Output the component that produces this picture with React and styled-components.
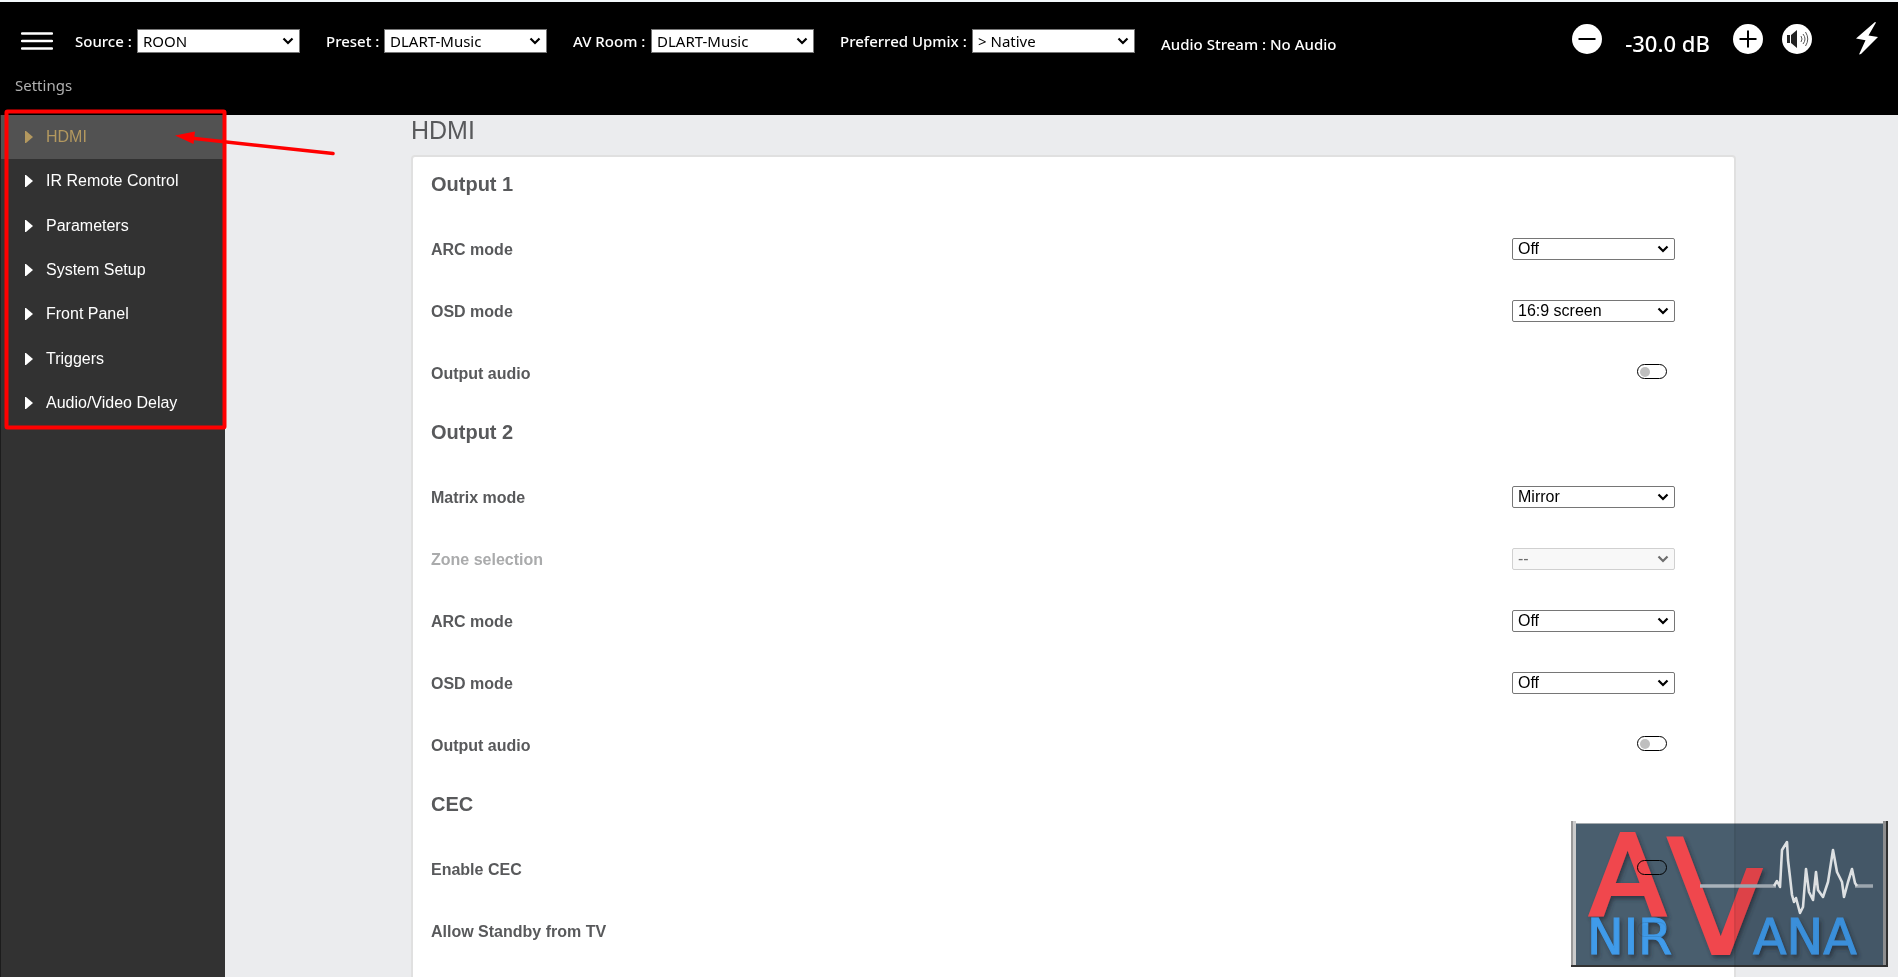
import React, { useState } from 'react';
import styled, { createGlobalStyle, css } from 'styled-components';

const colors = {
  black: '#000000',
  white: '#ffffff',
  page: '#ebecee',
  sidebar: '#323232',
  active: '#525252',
  gold: '#b3985f',
  text: '#58595b',
  muted: '#aaabac',
  border: '#e0e0e0',
  mark: '#ff0000',
};

const headerFont = '"Noto Sans", "Open Sans", sans-serif';
const bodyFont = '"Liberation Sans", Arial, sans-serif';

const chevron = (color) =>
  `url("data:image/svg+xml,%3Csvg xmlns='http://www.w3.org/2000/svg' width='12' height='8'%3E%3Cpath d='M1.500 1.500L6 6l4.500-4.500' fill='none' stroke='%23${color}' stroke-width='2.200'/%3E%3C/svg%3E")`;

const GlobalStyle = createGlobalStyle`
  * {
    box-sizing: border-box;
  }
  body {
    margin: 0;
    background: ${colors.page};
    color: ${colors.text};
    font-family: ${bodyFont};
    font-size: 16px;
  }
`;

const Page = styled.div`
  position: relative;
  display: flex;
  flex-direction: column;
  height: 100vh;
  overflow: hidden;
`;

const Header = styled.header`
  flex: none;
  padding: 21px 20px 18px 21px;
  border-top: 2px solid #f3f8fb;
  background: ${colors.black};
  color: ${colors.white};
  font-family: ${headerFont};
  font-size: 15px;
  font-weight: 500;
`;

const Toolbar = styled.div`
  display: flex;
  align-items: center;
  height: 36px;
`;

const IconButton = styled.button`
  display: flex;
  flex: none;
  padding: 0;
  border: 0;
  background: none;
  color: inherit;
  cursor: pointer;
`;

const Fields = styled.div`
  display: flex;
  align-items: center;
  gap: 26px;
  margin-left: 22px;
`;

const Field = styled.div`
  display: flex;
  align-items: center;
  justify-content: space-between;
  width: ${({ $width }) => $width}px;
  white-space: nowrap;
`;

const Select = styled.select`
  flex: none;
  appearance: none;
  width: 163px;
  height: 22px;
  padding: 0 20px 0 5px;
  border: 1px solid #767676;
  border-radius: 2px;
  background: ${colors.white} ${chevron('000')} no-repeat right 5px center;
  color: ${colors.black};
  font-family: ${bodyFont};
  font-size: 16px;
  line-height: 20px;

  &:disabled {
    border-color: #d0d0d0;
    background-color: #f8f8f8;
    background-image: ${chevron('6d6d6d')};
    color: #6d6d6d;
    opacity: 1;
  }
`;

const HeaderSelect = styled(Select)`
  height: 24px;
  border-radius: 0;
  font-family: ${headerFont};
  font-size: 15px;
`;

const Stream = styled.span`
  padding-top: 6px;
  white-space: nowrap;
`;

const Controls = styled.div`
  display: flex;
  align-items: center;
  margin-left: auto;
  padding-bottom: 5px;
`;

const Volume = styled.output`
  width: 131px;
  padding-top: 8px;
  font-size: 22px;
  line-height: 28px;
  text-align: center;
  white-space: nowrap;
`;

const MuteButton = styled(IconButton)`
  margin: 0 44px 0 19px;
`;

const Breadcrumb = styled.div`
  margin: 14px 0 0 -6px;
  color: #b0b0b0;
  font-weight: 400;
  line-height: 24px;
`;

const Body = styled.div`
  display: flex;
  flex: 1;
  min-height: 0;
`;

const Sidebar = styled.nav`
  flex: none;
  width: 225px;
  border-left: 1px solid #1c1c1c;
  background: ${colors.sidebar};
`;

const MenuList = styled.ul`
  display: grid;
  grid-auto-rows: 1fr;
  min-height: 310px;
  margin: 0;
  padding: 0;
  list-style: none;
`;

const MenuLink = styled.a`
  display: flex;
  align-items: center;
  gap: 13px;
  height: 100%;
  padding-left: 24px;
  color: ${colors.white};
  text-decoration: none;

  ${({ $active }) => $active && css`
    background: ${colors.active};
    color: ${colors.gold};
  `}
`;

const Content = styled.main`
  flex: 1;
  margin: 0 162px 0 186px;
`;

const Title = styled.h1`
  margin: 0;
  padding: 1px 0 11px;
  font-size: 25px;
  font-weight: 400;
  line-height: 28px;
`;

const Card = styled.div`
  padding: 0 59px 20px 18px;
  border: 2px solid ${colors.border};
  border-radius: 4px;
  background: ${colors.white};
`;

const SectionTitle = styled.h2`
  margin: 0;
  padding: 15px 0 23px;
  font-size: 20px;
  line-height: 24px;
`;

const Row = styled.div`
  display: flex;
  align-items: center;
  justify-content: space-between;
  height: 62px;
  padding-bottom: 2px;
`;

const RowLabel = styled.label`
  padding-top: 2px;
  color: ${({ $disabled }) => ($disabled ? colors.muted : colors.text)};
  font-weight: 700;
`;

const Toggle = styled.input`
  display: flex;
  align-items: center;
  appearance: none;
  width: 30px;
  height: 15px;
  margin: 0 8px 3px 0;
  padding: 0 2px;
  border: 1px solid ${colors.black};
  border-radius: 8px;
  background: ${colors.white};

  &::before {
    content: '';
    width: 10px;
    height: 10px;
    border-radius: 50%;
    background: ${({ $blank }) => ($blank ? 'transparent' : '#bfbfbf')};
  }

  &:checked {
    justify-content: flex-end;
  }

  &:disabled {
    opacity: 0.1;
  }
`;

// Overlays that sit on top of the page
const Annotation = styled.svg`
  position: absolute;
  top: 108px;
  left: 0;
  pointer-events: none;
`;

const Watermark = styled.svg`
  position: absolute;
  right: 10px;
  bottom: 10px;
  mix-blend-mode: multiply;
  pointer-events: none;
`;

const headerFields = [
  { id: 'source', label: 'Source :', value: 'ROON', width: 225 },
  { id: 'preset', label: 'Preset :', value: 'DLART-Music', width: 221 },
  { id: 'room', label: 'AV Room :', value: 'DLART-Music', width: 241 },
  { id: 'upmix', label: 'Preferred Upmix :', value: '> Native', width: 295 },
];

const menu = [
  'HDMI',
  'IR Remote Control',
  'Parameters',
  'System Setup',
  'Front Panel',
  'Triggers',
  'Audio/Video Delay',
];

const sections = [
  {
    title: 'Output 1',
    rows: [
      { label: 'ARC mode', value: 'Off' },
      { label: 'OSD mode', value: '16:9 screen' },
      { label: 'Output audio' },
    ],
  },
  {
    title: 'Output 2',
    rows: [
      { label: 'Matrix mode', value: 'Mirror' },
      { label: 'Zone selection', value: '--', disabled: true },
      { label: 'ARC mode', value: 'Off' },
      { label: 'OSD mode', value: 'Off' },
      { label: 'Output audio' },
    ],
  },
  {
    title: 'CEC',
    rows: [
      { label: 'Enable CEC', blank: true },
      { label: 'Allow Standby from TV', toggleDisabled: true },
    ],
  },
];

const MenuIcon = () => (
  <svg width="32" height="18" viewBox="0 0 32 18">
    <path d="M1 1.500h30M1 9h30M1 16.500h30" stroke="currentColor" strokeWidth="2.500" strokeLinecap="round" />
  </svg>
);

const RoundIcon = ({ children }) => (
  <svg width="30" height="30" viewBox="0 0 30 30">
    <circle cx="15" cy="15" r="15" fill="#fff" />
    {children}
  </svg>
);

const BoltIcon = () => (
  <svg width="22" height="33" viewBox="0 0 22 33">
    <path d="M19 0L0 16.5l9.5 1.8L3 32.5l2-.5L22 15l-9.5-1.5L20 .5z" fill="#fff" />
  </svg>
);

const SettingRow = ({ id, label, value, disabled, toggleDisabled, blank }) => {
  const [on, setOn] = useState(false);
  return (
    <Row>
      <RowLabel htmlFor={id} $disabled={disabled}>{label}</RowLabel>
      {value ? (
        <Select id={id} disabled={disabled}>
          <option>{value}</option>
        </Select>
      ) : (
        <Toggle
          id={id}
          type="checkbox"
          checked={on}
          disabled={toggleDisabled}
          $blank={blank}
          onChange={(e) => setOn(e.target.checked)}
        />
      )}
    </Row>
  );
};

const Logo = () => (
  <Watermark width="317" height="146" viewBox="0 0 317 146" role="img" aria-label="AV Nirvana">
    <defs>
      <filter id="logoShadow" x="-10%" y="-10%" width="125%" height="125%">
        <feDropShadow dx="2" dy="3" stdDeviation="2" floodColor="#222b33" floodOpacity="0.7" />
      </filter>
      <clipPath id="armClip">
        <path d="M60 0h90v47h80v100H60z" />
      </clipPath>
    </defs>
    <rect width="317" height="146" fill="#495e6e" />
    <path d="M0 0h317v2H0z" fill="#fff" />
    <path d="M5 2.500h307" stroke="#a4aaae" />
    <path d="M0 0h2v146H0z" fill="#999" />
    <path d="M2 0h3v146H2z" fill="#ccc" />
    <path d="M312 0h3v146h-3z" fill="#999" />
    <path d="M315 0h2v146h-2zM0 144h317v2H0z" fill="#333" />
    <g fontFamily="DejaVu Sans, sans-serif" filter="url(#logoShadow)">
      <g fill="#f0474e">
        <text x="19" y="94" fontSize="110" fontWeight="400" stroke="#f0474e" strokeWidth="4">A</text>
        <g clipPath="url(#armClip)">
          <text x="94" y="134" fontSize="163" fontWeight="400">V</text>
        </g>
      </g>
      <g fill="#3f9bea" fontSize="49" fontWeight="400" stroke="#3f9bea" strokeWidth="1">
        <text x="16" y="133">NIR</text>
        <text x="182" y="133">ANA</text>
      </g>
    </g>
    <g fill="none" strokeLinejoin="round">
      <path d="M129 65h76M284 65h18" stroke="#a9b3bb" strokeWidth="3.500" />
      <path
        d="M203 65l3-5 3 6 2-37 5-8 1 18 2 17 2 18 2 7 2-4 4 15 3-6 3-38 3 23 4 8 3-28 2 18 5 7 5-15 5-32 4 22 5 10 2 15 4-15 4-13 3 14 2 3"
        stroke="#f0f2f3"
        strokeWidth="2.600"
      />
    </g>
  </Watermark>
);

export default function App() {
  return (
    <Page>
      <GlobalStyle />
      <Header>
        <Toolbar>
          <IconButton aria-label="Menu"><MenuIcon /></IconButton>
          <Fields>
            {headerFields.map(({ id, label, value, width }) => (
              <Field key={id} $width={width}>
                <label htmlFor={id}>{label}</label>
                <HeaderSelect id={id}>
                  <option>{value}</option>
                </HeaderSelect>
              </Field>
            ))}
            <Stream>Audio Stream : No Audio</Stream>
          </Fields>
          <Controls>
            <IconButton aria-label="Volume down">
              <RoundIcon>
                <path d="M6.500 15h17" stroke="#000" strokeWidth="2" />
              </RoundIcon>
            </IconButton>
            <Volume>-30.0 dB</Volume>
            <IconButton aria-label="Volume up">
              <RoundIcon>
                <path d="M6.500 15h17M15 6.500v17" stroke="#000" strokeWidth="2" />
              </RoundIcon>
            </IconButton>
            <MuteButton aria-label="Mute">
              <RoundIcon>
                <path d="M5 11h3v8H5zM9 11l6-5v18l-6-5z" fill="#222" />
                <path
                  d="M19 12q2 3 0 6M21 10q4 5 0 10M23.500 8q4.500 7 0 14"
                  fill="none"
                  stroke="#555"
                  strokeWidth="1"
                />
              </RoundIcon>
            </MuteButton>
            <IconButton aria-label="Power"><BoltIcon /></IconButton>
          </Controls>
        </Toolbar>
        <Breadcrumb>Settings</Breadcrumb>
      </Header>
      <Body>
        <Sidebar>
          <MenuList>
            {menu.map((item, i) => (
              <li key={item}>
                <MenuLink href="#" $active={i === 0}>
                  <svg width="8" height="12" viewBox="0 0 8 12">
                    <path d="M0 0h1l7 6-7 6H0z" fill="currentColor" />
                  </svg>
                  {item}
                </MenuLink>
              </li>
            ))}
          </MenuList>
        </Sidebar>
        <Content>
          <Title>HDMI</Title>
          <Card>
            {sections.map((section) => (
              <section key={section.title}>
                <SectionTitle>{section.title}</SectionTitle>
                {section.rows.map((row) => (
                  <SettingRow key={row.label} id={`${section.title}-${row.label}`.replace(/ /g, '-')} {...row} />
                ))}
              </section>
            ))}
          </Card>
        </Content>
      </Body>
      <Annotation width="340" height="325" viewBox="0 108 340 325" fill="none" stroke={colors.mark}>
        <rect x="6.500" y="111.500" width="218" height="316" rx="1" strokeWidth="4" />
        <path d="M190 138l143 15.500" strokeWidth="3.500" strokeLinecap="round" />
        <path d="M175 135.500l20-4-1.500 12.500z" fill={colors.mark} stroke="none" />
      </Annotation>
      <Logo />
    </Page>
  );
}
